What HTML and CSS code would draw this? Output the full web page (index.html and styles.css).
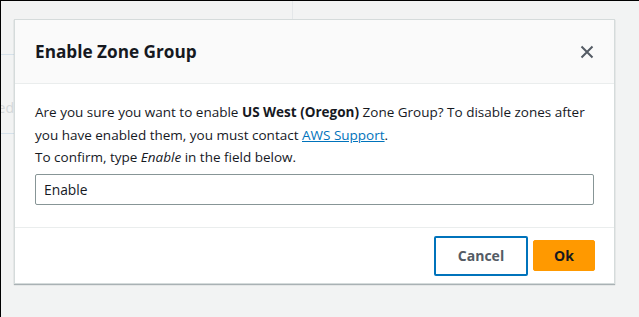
FILE: index.html
```html
<!DOCTYPE html>
<html lang="en">
<head>
    <meta charset="UTF-8">
    <title>Enable Zone Group</title>
    <link rel="stylesheet" href="styles.css">
</head>
<body>
    <div class="frame">
        <div class="backdrop">
            <span class="bg-line bg-line-top"></span>
            <span class="bg-line bg-line-bottom"></span>
            <span class="bg-col"></span>
            <span class="bg-text">ed</span>
        </div>

        <div class="modal">
            <div class="modal-header">
                <h2>Enable Zone Group</h2>
                <button class="close-button" aria-label="Close">
                    <svg width="16" height="16" viewBox="0 0 16 16">
                        <path d="M2.5 2.5l11 11M13.5 2.5l-11 11" stroke="#545b64" stroke-width="2" fill="none"/>
                    </svg>
                </button>
            </div>

            <div class="modal-body">
                <p class="warning">Are you sure you want to enable <b>US West (Oregon)</b> Zone Group? To disable zones after<br>you have enabled them, you must contact <a href="#">AWS Support</a>.</p>
                <p class="confirm-hint">To confirm, type <i>Enable</i> in the field below.</p>
                <input class="confirm-input" type="text" value="Enable">
            </div>

            <div class="modal-footer">
                <button class="btn btn-cancel">Cancel</button>
                <button class="btn btn-ok">Ok</button>
            </div>
        </div>
    </div>
</body>
</html>
```

FILE: styles.css
```css
body {
    margin: 0;
    padding: 0;
    background-color: #fff;
    font-family: 'Open Sans', 'Noto Sans', sans-serif;
    color: #16191f;
}

.frame {
    position: relative;
    width: 627px;
    height: 303px;
    border: 1px solid #000;
    background-color: #f2f3f3;
    box-shadow: 4px 4px 3px rgba(0, 0, 0, 0.45);
    padding: 18px 0 0 13px;
    overflow: hidden;
}

.backdrop {
    position: absolute;
    top: 0;
    left: 0;
    width: 100%;
    height: 100%;
    pointer-events: none;
}

.bg-line {
    position: absolute;
    left: 0;
    width: 13px;
    height: 1px;
    background-color: #d5e1ea;
}

.bg-line-top {
    top: 53px;
}

.bg-line-bottom {
    top: 132px;
}

.bg-col {
    position: absolute;
    top: 0;
    left: 291px;
    width: 1px;
    height: 18px;
    background-color: #e4e7e9;
}

.bg-text {
    position: absolute;
    top: 97px;
    left: 0;
    width: 13px;
    overflow: hidden;
    direction: rtl;
    font-size: 14px;
    color: #d4d7d9;
}

.modal {
    position: relative;
    width: 601px;
    height: 265px;
    box-sizing: border-box;
    background-color: #fff;
    border: 1px solid #d5dbdb;
    box-shadow: 0 1px 1px rgba(0, 28, 36, 0.3);
    display: flex;
    flex-direction: column;
}

.modal-header {
    height: 64px;
    box-sizing: border-box;
    background-color: #fafafa;
    border-bottom: 1px solid #eaeded;
    display: flex;
    align-items: center;
    justify-content: space-between;
    padding: 0 19px 0 20px;
}

.modal-header h2 {
    margin: 0;
    font-size: 17.2px;
    font-weight: 700;
    color: #16191f;
}

.close-button {
    background: none;
    border: none;
    padding: 0;
    width: 16px;
    height: 16px;
    cursor: pointer;
}

.modal-body {
    padding: 17px 20px 22px 20px;
    border-bottom: 1px solid #eaeded;
    font-size: 13.5px;
    line-height: 22px;
}

.modal-body p {
    margin: 0;
}

.modal-body .warning {
    white-space: nowrap;
    line-height: 22.5px;
}

.modal-body a {
    color: #0073bb;
    text-decoration: underline;
}

.confirm-input {
    display: block;
    width: 559px;
    height: 31px;
    box-sizing: border-box;
    margin-top: 6px;
    padding: 0 8px;
    border: 1px solid #879596;
    border-radius: 2px;
    font-family: 'Open Sans', 'Noto Sans', sans-serif;
    font-size: 13.8px;
    color: #16191f;
}

.modal-footer {
    flex: 1;
    display: flex;
    justify-content: flex-end;
    align-items: center;
    gap: 5px;
    padding: 0 19px 0 0;
}

.btn {
    font-family: 'Open Sans', 'Noto Sans', sans-serif;
    font-size: 14px;
    font-weight: 700;
    border-radius: 2px;
    cursor: pointer;
}

.btn-cancel {
    width: 94px;
    height: 40px;
    background-color: #fff;
    color: #545b64;
    border: 2px solid #0073bb;
}

.btn-ok {
    width: 62px;
    height: 31px;
    background-color: #ff9900;
    color: #16191f;
    border: 1px solid #ff9900;
}
```
